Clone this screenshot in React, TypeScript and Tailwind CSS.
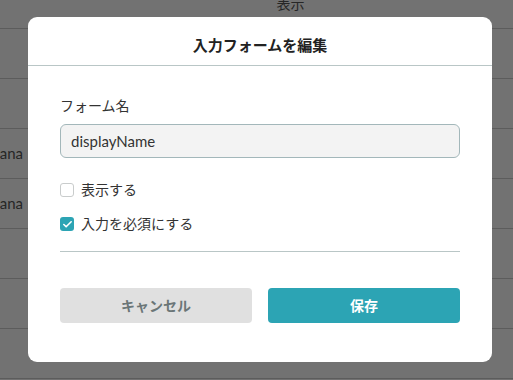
import { Check } from 'lucide-react'

const rows = ['', '', 'ana', 'ana', '', '', '', '', '']

export default function App() {
  return (
    <div
      className="relative h-[380px] w-[513px] overflow-hidden bg-[#727272] text-[#262626]"
      style={{ fontFamily: 'Lato, "Noto Sans CJK JP", sans-serif' }}
    >
      {/* table behind the dim overlay */}
      <div className="-mt-[21px]">
        <div className="flex h-[50px] items-center justify-center border-b border-[#5c5c5c] pl-[68px] text-[14px]">
          表示
        </div>
        {rows.map((r, i) => (
          <div
            key={i}
            className="flex h-[50px] items-center justify-end border-b border-[#5c5c5c] pr-[490px] text-[15px]"
          >
            {r}
          </div>
        ))}
      </div>

      {/* modal */}
      <div className="absolute left-[28px] top-[17px] w-[464px] rounded-[9px] bg-white">
        <div className="border-b border-[#b9c6c6] pb-[10px] pt-[19px] text-center text-[15px] font-bold leading-[19px] text-[#222]">
          入力フォームを編集
        </div>
        <div className="px-8 pb-[39px] pt-[30px]">
          <div className="mb-2 text-[14px] leading-5 text-[#333]">フォーム名</div>
          <div className="flex h-[34px] items-center rounded-[6px] border border-[#a3b7ba] bg-[#f3f3f3] px-[10px] text-[15px] text-[#333]">
            displayName
          </div>
          <div className="mt-[22px] flex flex-col gap-[14px] text-[14px] leading-5 text-[#333]">
            <label className="flex items-center gap-[7px]">
              <span className="h-[14px] w-[14px] rounded-[3px] border border-[#c9cccc] bg-white" />
              表示する
            </label>
            <label className="flex items-center gap-[7px]">
              <span className="flex h-[14px] w-[14px] items-center justify-center rounded-[3px] bg-[#2ca4b4]">
                <Check size={11} strokeWidth={3.5} className="text-white" />
              </span>
              入力を必須にする
            </label>
          </div>
          <div className="mt-[17px] border-t border-[#b9c6c6]" />
          <div className="mt-9 flex gap-4">
            <button className="h-[35px] flex-1 rounded-[4px] bg-[#e0e0e0] text-[14px] font-bold text-[#6b7677]">
              キャンセル
            </button>
            <button className="h-[35px] flex-1 rounded-[4px] bg-[#2ca4b4] text-[14px] font-bold text-white">
              保存
            </button>
          </div>
        </div>
      </div>
    </div>
  )
}
